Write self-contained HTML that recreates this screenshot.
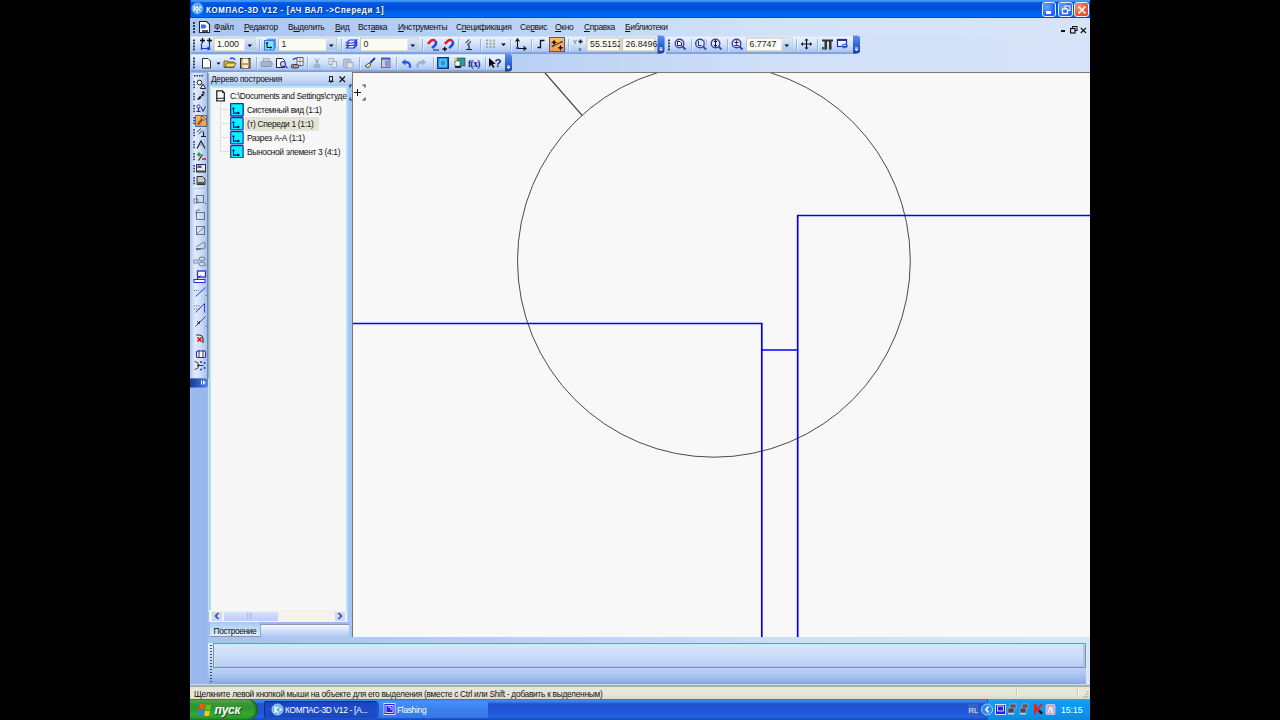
<!DOCTYPE html>
<html><head><meta charset="utf-8">
<style>
*{box-sizing:border-box;margin:0;padding:0}
html,body{width:1280px;height:720px;overflow:hidden;background:#000}
body{position:relative;font-family:"Liberation Sans",sans-serif;font-size:8px;color:#000}
.a{position:absolute}
#scr{position:absolute;left:190px;top:0;width:900px;height:720px;overflow:hidden;background:#c4d8f6}
#title{left:0;top:0;width:900px;height:18px;background:linear-gradient(#4c9cf6 0,#3a8cf2 1.5px,#0060e8 2.5px,#0052dc 5px,#0050dc 9px,#0062ec 12px,#0068f2 16.5px,#0044d8 17.5px,#0038c8 18px)}
#title .t{left:15.5px;top:4px;color:#fff;font-weight:bold;font-size:9.6px;letter-spacing:0.8px;transform:scaleX(0.82);transform-origin:0 0;white-space:nowrap;text-shadow:1px 1px 0 #0a2a8a}
.tb{top:2px;width:14.5px;height:14.5px;border:1px solid #e8f0ff;border-radius:3px;background:radial-gradient(circle at 30% 30%,#6aa8ff,#2a6cf6 55%,#1a56e8)}
#menu{left:0;top:18px;width:900px;height:18px;background:linear-gradient(90deg,#aac6f2 0,#b8d0f5 300px,#c8dcf7 450px,#d2e2f8 600px,#d8e4f8 900px)}
#menu span{position:absolute;top:4px;font-size:8.5px;letter-spacing:-0.35px;white-space:nowrap;color:#111}
#menu u{text-decoration-thickness:1px;text-underline-offset:1px}
#dock{left:0;top:36px;width:900px;height:36px;background:linear-gradient(90deg,#a8c4f0 0,#b6cef4 300px,#c4d8f6 450px,#d0e0f8 600px,#d6e2f8 900px)}
.bar{height:18px;border-radius:0 3px 3px 0;background:linear-gradient(#eaf2fd 0,#d6e5fb 30%,#bcd3f7 70%,#9fbcee 100%);border-bottom:1px solid #7a9ad8}
.grip{width:2px;background:repeating-linear-gradient(#3a5a9a 0 1px,transparent 1px 3px)}
.cb{height:14px;background:#fff;border:1px solid #b8c8d8}
.cbb{width:10px;height:12px;background:linear-gradient(#dae6fb,#aac4f0)}
.sep{width:1px;height:13px;background:#9ab2e0;border-right:1px solid #fff}
.txt{white-space:nowrap}
#draw{left:163px;top:72px;width:737px;height:565px;background:#f7f7f7;border-top:1px solid #7c786c;border-left:1px solid #7c786c}
</style></head><body>
<div id="scr">
  <div id="title" class="a">
    <div class="a" style="left:0;top:0;width:1px;height:18px;background:#0036c0"></div>
    <svg class="a" style="left:1px;top:2px" width="14" height="14"><circle cx="6.4" cy="6.4" r="5.6" fill="#58aaf0"/><circle cx="6.4" cy="6.4" r="5.6" fill="none" stroke="#80c4f8" stroke-width=".6"/>
    <path d="M3.3 3.8 v5.5 M4.2 6.5 l2.5 -2.3 M4.2 6.5 l2.5 2.5 M6.5 5.5 l3 3.5" stroke="#f0f8ff" stroke-width="1.3" fill="none"/><circle cx="9.3" cy="5.3" r="1" fill="#fff"/><rect x="5.3" y="9.3" width="1.6" height="1.6" fill="#fff"/></svg>
    <div class="a t">КОМПАС-3D V12 - [АЧ ВАЛ -&gt;Спереди 1]</div>
    <div class="a tb" style="left:851.5px"><div class="a" style="left:3px;top:8px;width:5px;height:2.5px;background:#fff"></div></div>
    <div class="a tb" style="left:868px"><svg class="a" style="left:2px;top:2px" width="10" height="10"><rect x="4" y="1" width="5" height="4.5" fill="none" stroke="#fff" stroke-width="1"/><rect x="1.5" y="4" width="5" height="4.5" fill="#2a6cf6" stroke="#fff" stroke-width="1.3"/></svg></div>
    <div class="a tb" style="left:884px;background:radial-gradient(circle at 30% 30%,#f89878,#e85a30 55%,#d84818)"><svg class="a" style="left:2px;top:2px" width="10" height="10"><path d="M1.5 1.5 L8.5 8.5 M8.5 1.5 L1.5 8.5" stroke="#fff" stroke-width="1.6"/></svg></div>
  </div>
  <div id="menu" class="a">
    <div class="a" style="left:3px;top:4px;width:2px;height:11px;background:repeating-linear-gradient(#2e3e62 0 1.6px,transparent 1.6px 3px)"></div>
    <svg class="a" style="left:8px;top:2px" width="13" height="14"><path d="M1.5 1.5 h7 l3 3 v8 h-10 z" fill="#fff" stroke="#222" stroke-width="1.1"/><path d="M3 4.5 h4 l1.5 2 l-1.5 2 h-4 z" fill="#3a6af0"/><rect x="4" y="10" width="6" height="2" fill="#555"/></svg>
    <span style="left:24px"><u>Ф</u>айл</span>
    <span style="left:54px"><u>Р</u>едактор</span>
    <span style="left:98px">В<u>ы</u>делить</span>
    <span style="left:145px"><u>В</u>ид</span>
    <span style="left:168px">Вст<u>а</u>вка</span>
    <span style="left:208px"><u>И</u>нструменты</span>
    <span style="left:266px">С<u>п</u>ецификация</span>
    <span style="left:330px">Се<u>р</u>вис</span>
    <span style="left:365px"><u>О</u>кно</span>
    <span style="left:394px"><u>С</u>правка</span>
    <span style="left:435px"><u>Б</u>иблиотеки</span>
    <div class="a" style="left:870.5px;top:12px;width:4.5px;height:2px;background:#111"></div>
    <svg class="a" style="left:880px;top:7.5px" width="8" height="8"><rect x="2.5" y="0.5" width="4.5" height="4" fill="none" stroke="#111" stroke-width="1"/><rect x="0.5" y="2.5" width="4.5" height="4.5" fill="#d8e4f8" stroke="#111" stroke-width="1.2"/></svg>
    <svg class="a" style="left:890px;top:8.5px" width="7" height="7"><path d="M0.8 0.8 L6 6 M6 0.8 L0.8 6" stroke="#111" stroke-width="1.2"/></svg>
  </div>
  <div id="dock" class="a"></div>

  <!-- left vertical toolbar area -->
  <div class="a" style="left:0;top:72px;width:19px;height:613px;background:linear-gradient(90deg,#b0cef8 0,#98b8ee 1.5px,#98b8ee 17px,#a0bcf0 18px)"></div>
  <!-- tree panel -->
  <div class="a" style="left:18px;top:72px;width:145px;height:571px;background:#a6c2f0"></div>
  <div class="a" style="left:18px;top:72px;width:144px;height:14px;background:linear-gradient(#e0ebfc,#c6daf8 50%,#a8c4f0)"></div>
  <div class="a txt" style="left:21px;top:74px;font-size:8.4px;letter-spacing:-0.3px;color:#111">Дерево построения</div>
  <div class="a" style="left:18px;top:86px;width:141px;height:526px;background:#f7f7f7;border:1px solid #b4ecf2;border-top:2px solid #b4ecf2"></div>
  <div class="a" style="left:156px;top:86px;width:3px;height:551px;background:linear-gradient(90deg,#b8f0f8,#a8d8f4 60%,#b0c8e8)"></div>
  <div class="a" style="left:159px;top:86px;width:3px;height:551px;background:#a4c4f8"></div>
  <div class="a" style="left:162px;top:72px;width:1px;height:565px;background:#7c786c"></div>

  <!-- tree content -->
  <div class="a" style="left:138px;top:76px;width:6px;height:8px">
    <svg width="6" height="8"><rect x="1.5" y="0.5" width="3" height="4.5" fill="#ddd" stroke="#222" stroke-width="1"/><line x1="0.5" y1="5.5" x2="5.5" y2="5.5" stroke="#222"/><line x1="3" y1="5" x2="3" y2="7" stroke="#222"/></svg>
  </div>
  <div class="a" style="left:148px;top:75px;width:9px;height:9px">
    <svg width="9" height="9"><path d="M1.5 1.5 L7 7 M7 1.5 L1.5 7" stroke="#111" stroke-width="1.2"/></svg>
  </div>
  <svg class="a" style="left:18px;top:88px" width="140" height="70">
    <path d="M8.8 2.8 h5.5 l2 2 v8 h-7.5 z" fill="#fff" stroke="#222" stroke-width="1.3"/>
    <path d="M14 2.5 l2.5 2.5 h-2.5 z" fill="#0a3a3a"/>
    <path d="M9 10.3 h7" stroke="#333" stroke-width="1.1"/>
    <path d="M10 12 h1.5 M12.5 12 h1.5" stroke="#eee" stroke-width=".6"/>
    <path d="M12.5 15 V64 M12.5 21.5 H22 M12.5 35.5 H22 M12.5 49.5 H22 M12.5 63.5 H22" stroke="#c8c8c0" stroke-width="1" stroke-dasharray="1 1"/>
    <g id="vi">
      <rect x="22.7" y="15.7" width="12.4" height="12.2" rx=".6" fill="#00f8fa" stroke="#2a2ab0" stroke-width="1.2"/>
      <path d="M25.5 20.5 v4.6 h4.5" fill="none" stroke="#00107a" stroke-width="1.1"/>
      <path d="M25.5 19 l1.3 1.5 l-1.3 1.5 l-1.3 -1.5 z" fill="#00107a"/>
      <circle cx="30.3" cy="25" r="1.3" fill="#00107a"/>
    </g>
  </svg>
  <div class="a" style="left:55px;top:117px;width:74px;height:14px;background:#e4e4d6"></div>
  <svg class="a" style="left:18px;top:88px" width="140" height="70">
    <use href="#vi" x="0" y="0"/>
    <use href="#vi" x="0" y="14"/>
    <use href="#vi" x="0" y="28"/>
    <use href="#vi" x="0" y="42"/>
  </svg>
  <div class="a txt" style="left:40px;top:91px;font-size:8.4px;letter-spacing:-0.3px;color:#111">C:\Documents and Settings\студе</div>
  <div class="a txt" style="left:57px;top:105px;font-size:8.4px;letter-spacing:-0.3px;color:#111">Системный вид (1:1)</div>
  <div class="a txt" style="left:57px;top:119px;font-size:8.4px;letter-spacing:-0.3px;color:#111">(т) Спереди 1 (1:1)</div>
  <div class="a txt" style="left:57px;top:133px;font-size:8.4px;letter-spacing:-0.3px;color:#111">Разрез А-А (1:1)</div>
  <div class="a txt" style="left:57px;top:147px;font-size:8.4px;letter-spacing:-0.3px;color:#111">Выносной элемент 3 (4:1)</div>
  <!-- scrollbar + tab -->
  <div class="a" style="left:19px;top:610px;width:138px;height:12px;background:#f4f2ea"></div>
  <div class="a" style="left:18.5px;top:86px;width:3px;height:524px;background:linear-gradient(90deg,#a8b4bc,#c0e8f8 50%,#fdfaf8)"></div>
  <div class="a" style="left:22px;top:611.5px;width:10px;height:9px;background:#c8d8f8"></div>
  <svg class="a" style="left:23px;top:611px" width="8" height="10"><path d="M5.5 2 L2.5 5 L5.5 8" fill="none" stroke="#334a80" stroke-width="1.5"/></svg>
  <div class="a" style="left:34px;top:611.5px;width:54px;height:9px;background:linear-gradient(#d4e0fc,#bccef6)"></div>
  <div class="a" style="left:57px;top:613px;width:5px;height:6px;background:repeating-linear-gradient(90deg,#a8bce8 0 1px,transparent 1px 2px)"></div>
  <div class="a" style="left:145px;top:611.5px;width:10px;height:9px;background:#c8d8f8"></div>
  <svg class="a" style="left:146px;top:611px" width="8" height="10"><path d="M2.5 2 L5.5 5 L2.5 8" fill="none" stroke="#334a80" stroke-width="1.5"/></svg>
  <div class="a" style="left:18px;top:622px;width:141px;height:15px;background:linear-gradient(#9ab8ec,#a6c2f0)"></div>
  <div class="a" style="left:71px;top:623.5px;width:88px;height:14px;background:linear-gradient(#f4f8fe,#d0e0fa 45%,#a8c4f0);border-top:1px solid #8898b0"></div>
  <div class="a" style="left:20px;top:622px;width:51px;height:15px;background:linear-gradient(#a8c8f2,#c8e0f8 60%,#dcecfa);border-bottom:1px solid #8a92a4;border-right:1px solid #98a4b8"></div>
  <div class="a txt" style="left:23.5px;top:625.5px;font-size:8.4px;letter-spacing:-0.38px;color:#111">Построение</div>
  <!-- drawing area -->
  <div class="a" style="left:163px;top:72px;width:737px;height:565px;background:#f8f8f8;border-top:1px solid #7c786c;overflow:hidden">
    <svg width="737" height="565" style="position:absolute;left:0;top:0">
      <g transform="translate(-353,-73)">
        <circle cx="713.9" cy="260.8" r="196.4" fill="none" stroke="#4a4a4a" stroke-width="1"/>
        <line x1="544.2" y1="72" x2="582.1" y2="115.4" stroke="#303030" stroke-width="1.1"/>
        <polyline points="352,323.5 761.8,323.5 761.8,637" fill="none" stroke="#0000f8" stroke-width="1.7"/>
        <polyline points="761.8,350 797.7,350" fill="none" stroke="#0000f8" stroke-width="1.7"/>
        <polyline points="797.7,637 797.7,215.5 1092,215.5" fill="none" stroke="#0000f8" stroke-width="1.7"/>
      </g>
    </svg>
  </div>
  <!-- command bar -->
  <div class="a" style="left:18px;top:637px;width:882px;height:48px;background:linear-gradient(90deg,#a6c2f0,#bcd2f6 40%,#d0e0f8 70%,#d8e6f8)"></div>
  <div class="a" style="left:18px;top:643px;width:878px;height:41px;background:linear-gradient(#e2ecfc 0,#d0e0fa 40%,#a8c4f0 80%,#88a8e0 100%)"></div>
  <div class="a" style="left:23px;top:643px;width:873px;height:25px;background:linear-gradient(#dae6fa,#ccdcf8 50%,#b8cef4);border:1px solid #8a9098;box-shadow:inset 1px 1px 0 #b8f0f4,inset -2px -1px 0 #a8c4f0"></div>
  <div class="a" style="left:20px;top:645px;width:2px;height:38px;background:repeating-linear-gradient(#3a4a6a 0 1.5px,transparent 1.5px 3px)"></div>
  <!-- status bar -->
  <div class="a" style="left:0;top:684px;width:900px;height:15px;background:linear-gradient(#c0d8fc 0,#c0d8fc 1px,#a8b0a8 1.5px,#a8b0a8 2.5px,#e6e6d6 3.5px,#e8e8d8 10px,#dedcc8 14px)"></div>
  <div class="a txt" style="left:4px;top:688.5px;font-size:8.4px;letter-spacing:-0.29px;color:#111">Щелкните левой кнопкой мыши на объекте для его выделения (вместе с Ctrl или Shift - добавить к выделенным)</div>
  <div class="a" style="left:826px;top:687px;width:2px;height:11px;background:linear-gradient(90deg,#d0ccb8 50%,#f8f6ee 50%)"></div>
  <div class="a" style="left:887px;top:687px;width:2px;height:11px;background:linear-gradient(90deg,#d0ccb8 50%,#f8f6ee 50%)"></div>
  <svg class="a" style="left:892px;top:689px" width="8" height="10"><g fill="#b8b4a0"><rect x="5" y="2" width="1.5" height="1.5"/><rect x="3" y="4.5" width="1.5" height="1.5"/><rect x="5" y="4.5" width="1.5" height="1.5"/><rect x="1" y="7" width="1.5" height="1.5"/><rect x="3" y="7" width="1.5" height="1.5"/><rect x="5" y="7" width="1.5" height="1.5"/></g></svg>
  <!-- taskbar -->
  <div class="a" style="left:0;top:699px;width:900px;height:21px;background:linear-gradient(#2c6ce0 0,#3a88e8 1.5px,#3884e8 2.5px,#2252d2 5px,#2054d4 8px,#2058da 14px,#2262e0 18px,#1a48b8 21px)"></div>
  <div class="a" style="left:797px;top:699px;width:103px;height:21px;background:linear-gradient(#28a4f8 0,#129aee 3px,#0c94ea 15px,#0a88dc 21px);border-left:1px solid #0a60c0"></div>
  <div class="a" style="left:0;top:699px;width:68px;height:21px;border-radius:0 10px 10px 0;background:linear-gradient(#3a8a3a 0,#4aaa4a 1.5px,#3a9a3a 4px,#2e922e 9px,#34a834 15px,#2c9a2c 19px,#287a28 21px);box-shadow:inset -2px 0 2px #1a5a1a"></div>
  <div class="a txt" style="left:24.5px;top:702.5px;color:#fff;font-size:12px;font-weight:bold;font-style:italic;letter-spacing:-0.2px;text-shadow:1px 1px 1px #1a4a1a">пуск</div>
  <div class="a" style="left:74px;top:701px;width:113px;height:17px;border-radius:2px;background:linear-gradient(#1a44b8,#1e4cc8 50%,#1a48c0);box-shadow:inset 1px 1px 1px #0c2c88"></div>
  <div class="a txt" style="left:95px;top:705px;color:#fff;font-size:8.4px;letter-spacing:-0.3px">КОМПАС-3D V12 - [А...</div>
  <div class="a" style="left:189px;top:701px;width:109px;height:17px;border-radius:2px;background:linear-gradient(#4a90f8,#3a80f0 50%,#3478e8)"></div>
  <div class="a txt" style="left:207px;top:705px;color:#fff;font-size:8.4px;letter-spacing:-0.3px">Flashing</div>

  <!-- taskbar icons -->
  <svg class="a" style="left:0;top:699px" width="900" height="21" viewBox="190 699 900 21">
    <g transform="translate(198,703)">
      <path d="M2 1.2 q2.5 -1 5 0 l-0.8 5 q-2.5 -1 -5 0 z" fill="#f0581a"/>
      <path d="M8 1.6 q2.5 .8 5 -.2 l-0.8 5 q-2.5 1 -5 .2 z" fill="#6ac018"/>
      <path d="M1 7.2 q2.5 -1 5 0 l-0.8 5 q-2.5 -1 -5 0 z" fill="#3a7af0"/>
      <path d="M7 7.6 q2.5 .8 5 -.2 l-0.8 5 q-2.5 1 -5 .2 z" fill="#f8c818"/>
    </g>
    <circle cx="277.5" cy="709.5" r="5.5" fill="#6ab0e8" stroke="#c8e8ff" stroke-width=".8"/>
    <path d="M275 706 v7 M275 709.5 l3.5 -3 M275 709.5 l3.5 3.5 M279.5 708 l1.5 1.5 l-1.5 1.5" stroke="#fff" stroke-width="1.2" fill="none"/>
    <rect x="384" y="703.5" width="11" height="11" fill="#2020e8" stroke="#fff" stroke-width=".8"/>
    <rect x="386" y="705.5" width="7" height="7" fill="none" stroke="#fff" stroke-width=".8"/>
    <path d="M388 707 h3 v3" stroke="#fff" stroke-width=".8" fill="none"/>
    <!-- tray -->
    <circle cx="987" cy="709.5" r="5.5" fill="#2a8af0" stroke="#c0e0ff" stroke-width=".8"/>
    <path d="M988.5 706.5 l-2.5 3 l2.5 3" stroke="#fff" stroke-width="1.6" fill="none"/>
    <rect x="995.5" y="704.5" width="10" height="10" fill="#2020f0" stroke="#fff" stroke-width=".8"/>
    <rect x="997.5" y="706" width="6" height="5" fill="none" stroke="#fff" stroke-width=".8"/>
    <g transform="translate(1008,704)"><rect x="2" y="0" width="6" height="5" fill="#556" stroke="#ccd" stroke-width=".5"/><rect x="0" y="4" width="6" height="5" fill="#445" stroke="#ccd" stroke-width=".5"/><rect x="0" y="9" width="6" height="1.5" fill="#ccd"/></g>
    <g transform="translate(1020,704)"><rect x="2" y="0" width="6" height="5" fill="#556" stroke="#ccd" stroke-width=".5"/><rect x="0" y="4" width="6" height="5" fill="#445" stroke="#ccd" stroke-width=".5"/><rect x="0" y="9" width="6" height="1.5" fill="#ccd"/></g>
    <path d="M1034 704 l2 0 l1 4 l4 -4 l2 0 l-4 5 l3 5 h-2 l-3 -4 l-1 4 h-2 z" fill="#f01818"/>
    <path d="M1040 710 l3 3 l-1.5 1.5 l-3 -3 z" fill="#111"/>
    <rect x="1046" y="704.5" width="9" height="10" rx="1" fill="#c8a8c8" stroke="#f0e0f0" stroke-width=".6"/>
    <path d="M1048 713 l2 -6 l2 6 M1052 707 v6" stroke="#fff" stroke-width="1" fill="none"/>
  </svg>
  <div class="a txt" style="left:871px;top:704.5px;color:#fff;font-size:8.6px">15:15</div>
  <div class="a txt" style="left:778px;top:704px;width:10px;height:12px;padding-top:1.5px;padding-left:0.5px;color:#e8f0ff;font-size:7.8px;letter-spacing:-0.2px;background:#3a60c0">RL</div>
</div>
<svg class="a" style="left:345px;top:80px" width="25" height="25" viewBox="345 80 25 25">
<path d="M354 92.5 h7 M357.5 89 v7" stroke="#111" stroke-width="1"/>
<path d="M350 87.5 v-2.5 h2.5 M362.5 85 h2.5 v2.5 M350 97.5 v2.5 h2.5 M362.5 100 h2.5 v-2.5" stroke="#333" stroke-width="1.2" fill="none"/>
</svg>
<!--TB--><svg class="a" style="left:0;top:0" width="1280" height="80"><defs>
<linearGradient id="tbg" x1="0" y1="0" x2="0" y2="1"><stop offset="0" stop-color="#ebf3fe"/><stop offset=".35" stop-color="#d8e7fc"/><stop offset=".7" stop-color="#bdd4f8"/><stop offset="1" stop-color="#9cbaee"/></linearGradient>
<linearGradient id="egr" x1="0" y1="0" x2="0" y2="1"><stop offset="0" stop-color="#5a8ef0"/><stop offset=".5" stop-color="#3468d8"/><stop offset="1" stop-color="#1a3fa8"/></linearGradient>
<linearGradient id="cbg" x1="0" y1="0" x2="0" y2="1"><stop offset="0" stop-color="#dce8fc"/><stop offset="1" stop-color="#a8c2f0"/></linearGradient>
<linearGradient id="org" x1="0" y1="0" x2="0" y2="1"><stop offset="0" stop-color="#ffc070"/><stop offset="1" stop-color="#f89a3a"/></linearGradient>
</defs>
<rect x="191" y="36.5" width="470" height="17.0" fill="url(#tbg)"/>
<rect x="191" y="52.5" width="470" height="1.2" fill="#6f8fd0"/>
<path d="M657.5 35.5 h4 q3 0 3 3 v12.0 q0 3 -3 3 h-4 z" fill="url(#egr)"/>
<rect x="659.5" y="47.5" width="3" height="1" fill="#fff"/><path d="M659.0 49.0 h4 l-2 2 z" fill="#fff"/>
<rect x="193" y="39.5" width="2" height="2" fill="#2e3e62"/><rect x="194.5" y="41.0" width="1" height="1" fill="#fff" opacity=".6"/><rect x="193" y="42.5" width="2" height="2" fill="#2e3e62"/><rect x="194.5" y="44.0" width="1" height="1" fill="#fff" opacity=".6"/><rect x="193" y="45.5" width="2" height="2" fill="#2e3e62"/><rect x="194.5" y="47.0" width="1" height="1" fill="#fff" opacity=".6"/><rect x="193" y="48.5" width="2" height="2" fill="#2e3e62"/><rect x="194.5" y="50.0" width="1" height="1" fill="#fff" opacity=".6"/>
<rect x="666" y="36.5" width="190" height="17.0" fill="url(#tbg)"/>
<rect x="666" y="52.5" width="190" height="1.2" fill="#6f8fd0"/>
<path d="M853 35.5 h4 q3 0 3 3 v12.0 q0 3 -3 3 h-4 z" fill="url(#egr)"/>
<rect x="855" y="47.5" width="3" height="1" fill="#fff"/><path d="M854.5 49.0 h4 l-2 2 z" fill="#fff"/>
<rect x="668" y="39.5" width="2" height="2" fill="#2e3e62"/><rect x="669.5" y="41.0" width="1" height="1" fill="#fff" opacity=".6"/><rect x="668" y="42.5" width="2" height="2" fill="#2e3e62"/><rect x="669.5" y="44.0" width="1" height="1" fill="#fff" opacity=".6"/><rect x="668" y="45.5" width="2" height="2" fill="#2e3e62"/><rect x="669.5" y="47.0" width="1" height="1" fill="#fff" opacity=".6"/><rect x="668" y="48.5" width="2" height="2" fill="#2e3e62"/><rect x="669.5" y="50.0" width="1" height="1" fill="#fff" opacity=".6"/>
<rect x="191" y="54.5" width="317" height="17.0" fill="url(#tbg)"/>
<rect x="191" y="70.5" width="317" height="1.2" fill="#6f8fd0"/>
<path d="M505 54 h4 q3 0 3 3 v11.5 q0 3 -3 3 h-4 z" fill="url(#egr)"/>
<rect x="507" y="65.5" width="3" height="1" fill="#fff"/><path d="M506.5 67.0 h4 l-2 2 z" fill="#fff"/>
<rect x="193" y="57.5" width="2" height="2" fill="#2e3e62"/><rect x="194.5" y="59.0" width="1" height="1" fill="#fff" opacity=".6"/><rect x="193" y="60.5" width="2" height="2" fill="#2e3e62"/><rect x="194.5" y="62.0" width="1" height="1" fill="#fff" opacity=".6"/><rect x="193" y="63.5" width="2" height="2" fill="#2e3e62"/><rect x="194.5" y="65.0" width="1" height="1" fill="#fff" opacity=".6"/><rect x="193" y="66.5" width="2" height="2" fill="#2e3e62"/><rect x="194.5" y="68.0" width="1" height="1" fill="#fff" opacity=".6"/>
<path d="M200 40.5 h5 M202.5 38 v5 M207 40.5 h5 M209.5 38 v5" stroke="#111" stroke-width="1.4"/>
<path d="M201.5 43 v7 M209.5 43 v7 M201.5 48.5 h8 M207.5 47 l2 1.5 l-2 1.5" stroke="#1a3ae8" stroke-width="1.2" fill="none"/>
<rect x="214.0" y="38.0" width="41.0" height="13.0" fill="#fbfbf6" stroke="#c2c8b0" stroke-width="1"/><rect x="244.5" y="38.5" width="10" height="12.0" fill="url(#cbg)"/><path d="M247.5 44.5 h4.5 l-2.25 2.5 z" fill="#000"/><text x="217.0" y="47.2" font-size="8.8" fill="#222">1.000</text>
<rect x="259" y="39" width="1" height="13" fill="#9ab2dc"/><rect x="260" y="39" width="1" height="13" fill="#f4f8fe" opacity=".6"/>
<path d="M266 40 l2 -1.5 h8 v9 l-2 2 z" fill="#58a0f8"/><rect x="264.5" y="40.5" width="9.5" height="9.5" fill="#7ee8ff" stroke="#3a6ef0" stroke-width="1"/>
<path d="M267 42.5 v5 h4.5 M266 43.5 l1 -1.2 l1 1.2 M270.5 46.5 l1.2 1 l-1.2 1" stroke="#000" stroke-width="1" fill="none"/>
<rect x="278.5" y="38.0" width="58" height="13.0" fill="#fbfbf6" stroke="#c2c8b0" stroke-width="1"/><rect x="326" y="38.5" width="10" height="12.0" fill="url(#cbg)"/><path d="M329 44.5 h4.5 l-2.25 2.5 z" fill="#000"/><text x="281.5" y="47.2" font-size="8.8" fill="#222">1</text>
<rect x="341" y="39" width="1" height="13" fill="#9ab2dc"/><rect x="342" y="39" width="1" height="13" fill="#f4f8fe" opacity=".6"/>
<g stroke="#2a3ae8" stroke-width="1.2" fill="#e8ecff"><path d="M346.5 48 l3 -3 h7 l-3 3 z"/><path d="M346.5 45.5 l3 -3 h7 l-3 3 z"/><path d="M346.5 43 l3 -3 h7 l-3 3 z"/></g><path d="M353.5 48.5 l3 -3 v-6" stroke="#2a3ae8" stroke-width="1.2" fill="none"/>
<rect x="360.5" y="38.0" width="57.5" height="13.0" fill="#fbfbf6" stroke="#c2c8b0" stroke-width="1"/><rect x="407.5" y="38.5" width="10" height="12.0" fill="url(#cbg)"/><path d="M410.5 44.5 h4.5 l-2.25 2.5 z" fill="#000"/><text x="363.5" y="47.2" font-size="8.8" fill="#222">0</text>
<rect x="422" y="39" width="1" height="13" fill="#9ab2dc"/><rect x="423" y="39" width="1" height="13" fill="#f4f8fe" opacity=".6"/>
<path d="M427.91 43.85 L430.88 40.88 A3 3 0 0 1 435.12 40.88" stroke="#f01818" stroke-width="2.6" fill="none"/><path d="M435.12 40.88 A3 3 0 0 1 435.12 45.12 L432.15 48.09" stroke="#2048e8" stroke-width="2.6" fill="none"/><path d="M433.5 50 h1.2 M435.5 50 h1.2 M437.5 50 h1.2" stroke="#111" stroke-width="1.4"/>
<path d="M444.91 43.85 L447.88 40.88 A3 3 0 0 1 452.12 40.88" stroke="#f01818" stroke-width="2.6" fill="none"/><path d="M452.12 40.88 A3 3 0 0 1 452.12 45.12 L449.15 48.09" stroke="#2048e8" stroke-width="2.6" fill="none"/><path d="M442.5 49 h4.5 M444.75 46.75 v4.5" stroke="#111" stroke-width="1.3"/>
<rect x="458" y="39" width="1" height="13" fill="#9ab2dc"/><rect x="459" y="39" width="1" height="13" fill="#f4f8fe" opacity=".6"/>
<path d="M465.5 43 l4 -3.5 M467 45 l4 -3.5" stroke="#555" stroke-width="1.1"/><path d="M469 44.5 v5 M466 49.5 h6" stroke="#222" stroke-width="1.2"/>
<rect x="480" y="39" width="1" height="13" fill="#9ab2dc"/><rect x="481" y="39" width="1" height="13" fill="#f4f8fe" opacity=".6"/>
<rect x="486.0" y="39.5" width="2" height="2" fill="#a8a890"/><rect x="486.0" y="42.7" width="2" height="2" fill="#a8a890"/><rect x="486.0" y="45.9" width="2" height="2" fill="#a8a890"/><rect x="489.5" y="39.5" width="2" height="2" fill="#a8a890"/><rect x="489.5" y="42.7" width="2" height="2" fill="#a8a890"/><rect x="489.5" y="45.9" width="2" height="2" fill="#a8a890"/><rect x="493.0" y="39.5" width="2" height="2" fill="#a8a890"/><rect x="493.0" y="42.7" width="2" height="2" fill="#a8a890"/><rect x="493.0" y="45.9" width="2" height="2" fill="#a8a890"/>
<path d="M501 43.5 h5 l-2.5 2.5 z" fill="#000"/>
<rect x="510" y="39" width="1" height="13" fill="#9ab2dc"/><rect x="511" y="39" width="1" height="13" fill="#f4f8fe" opacity=".6"/>
<path d="M517.5 48.5 v-9 M515.5 41.5 l2 -2.5 l2 2.5 M517.5 48.5 h8 M523.5 46.5 l2.5 2 l-2.5 2" stroke="#111" stroke-width="1.1" fill="none"/><circle cx="517.5" cy="48" r="1.3" fill="#2020e0"/>
<rect x="531" y="39" width="1" height="13" fill="#9ab2dc"/><rect x="532" y="39" width="1" height="13" fill="#f4f8fe" opacity=".6"/>
<path d="M537.5 47.5 h3 v-7 h4" stroke="#111" stroke-width="1.3" fill="none"/>
<rect x="549.5" y="37.5" width="15" height="14" fill="url(#org)" stroke="#4a5a8a" stroke-width="1"/>
<path d="M552.6 46.2 L561.7 41.9" stroke="#222" stroke-width="1"/><circle cx="552.6" cy="46.2" r="1.1" fill="#3a3ae8"/><circle cx="561.7" cy="41.9" r="1.1" fill="#3a3ae8"/><path d="M554.1 39.2 l.9 2.2 l2.2 .9 l-2.2 .9 l-.9 2.2 l-.9 -2.2 l-2.2 -.9 l2.2 -.9 z M560.5 44.7 l.9 2.2 l2.2 .9 l-2.2 .9 l-.9 2.2 l-.9 -2.2 l-2.2 -.9 l2.2 -.9 z" fill="#111"/>
<rect x="568" y="39" width="1" height="13" fill="#9ab2dc"/><rect x="569" y="39" width="1" height="13" fill="#f4f8fe" opacity=".6"/>
<text x="573" y="44" font-size="6" fill="#333">Y</text><path d="M578.5 41.5 h4 M580.5 39.5 v4" stroke="#111" stroke-width="1.3"/><text x="578.5" y="50.5" font-size="6" fill="#111">x</text>
<rect x="587.0" y="38.0" width="32.5" height="13.0" fill="#fbfbf6" stroke="#c2c8b0" stroke-width="1"/><text x="590.0" y="47.2" font-size="8.8" fill="#222">55.5152</text>
<rect x="620" y="38" width="2" height="13" fill="#d8d8c8"/>
<rect x="622.5" y="38.0" width="32.5" height="13.0" fill="#fbfbf6" stroke="#c2c8b0" stroke-width="1"/><text x="625.5" y="47.2" font-size="8.8" fill="#222">26.8496</text>
<circle cx="679.5" cy="43.5" r="4.3" fill="#dde8fa" stroke="#3e3eb0" stroke-width="1.4"/><path d="M682.5 46.5 l3 3" stroke="#3e3eb0" stroke-width="2"/><path d="M677.5 41.5 h2.5 l1.5 1.5 v2.5 h-4 z" fill="#fff" stroke="#111" stroke-width=".9"/>
<rect x="691" y="39" width="1" height="13" fill="#9ab2dc"/><rect x="692" y="39" width="1" height="13" fill="#f4f8fe" opacity=".6"/>
<circle cx="700" cy="43.5" r="4.3" fill="#dde8fa" stroke="#3e3eb0" stroke-width="1.4"/><path d="M703 46.5 l3 3" stroke="#3e3eb0" stroke-width="2"/><path d="M698.5 41 v4.5 h3" stroke="#333" stroke-width="1" fill="none"/><rect x="704" y="40" width="2.5" height="5" fill="none" stroke="#999" stroke-width=".6"/>
<circle cx="715.5" cy="43.5" r="4.3" fill="#dde8fa" stroke="#3e3eb0" stroke-width="1.4"/><path d="M718.5 46.5 l3 3" stroke="#3e3eb0" stroke-width="2"/><path d="M715.5 40.5 v6 M714 42 l1.5 -1.5 l1.5 1.5 M714 45 l1.5 1.5 l1.5 -1.5" stroke="#111" stroke-width="1" fill="none"/>
<rect x="727" y="39" width="1" height="13" fill="#9ab2dc"/><rect x="728" y="39" width="1" height="13" fill="#f4f8fe" opacity=".6"/>
<circle cx="736.5" cy="43.5" r="4.3" fill="#dde8fa" stroke="#3e3eb0" stroke-width="1.4"/><path d="M739.5 46.5 l3 3" stroke="#3e3eb0" stroke-width="2"/><path d="M734.5 42.5 h4 M736.5 40.5 v4 M734.5 45.5 h4" stroke="#222" stroke-width="1"/>
<rect x="746.5" y="38.0" width="45.5" height="13.0" fill="#fbfbf6" stroke="#c2c8b0" stroke-width="1"/><rect x="781.5" y="38.5" width="10" height="12.0" fill="url(#cbg)"/><path d="M784.5 44.5 h4.5 l-2.25 2.5 z" fill="#000"/><text x="749.5" y="47.2" font-size="8.8" fill="#222">6.7747</text>
<rect x="796" y="39" width="1" height="13" fill="#9ab2dc"/><rect x="797" y="39" width="1" height="13" fill="#f4f8fe" opacity=".6"/>
<path d="M806.5 39 v10 M801.5 44 h10" stroke="#111" stroke-width="1.2"/><path d="M806.5 38.5 l-2 2 h4 z M806.5 49.5 l-2 -2 h4 z M801 44 l2 -2 v4 z M812 44 l-2 -2 v4 z" fill="#111"/>
<rect x="817" y="39" width="1" height="13" fill="#9ab2dc"/><rect x="818" y="39" width="1" height="13" fill="#f4f8fe" opacity=".6"/>
<path d="M822 39.5 h11 v2 h-1.5 v8 h-2.5 v-8 h-2 v8 h-2.5 v-8 h-2.5 z" fill="#333"/><rect x="822" y="47" width="4" height="2.5" fill="#555"/>
<rect x="837.5" y="39.5" width="9" height="7" fill="#fff" stroke="#2a2a90" stroke-width="1.2"/><rect x="837.5" y="39" width="9" height="2" fill="#2a2a90"/><path d="M841.5 47 a3 3 0 0 1 5 -2 M847.5 45 a3 3 0 0 1 -5 2" stroke="#2a7af0" stroke-width="1.4" fill="none"/>
<path d="M202.5 58.5 h5.5 l2.5 2.5 v7 h-8 z" fill="#fff" stroke="#333" stroke-width="1"/>
<path d="M216.5 62.5 h4 l-2 2.2 z" fill="#000"/>
<path d="M224 61 h4 l1 1 h5 v5.5 h-10 z" fill="#d8c040" stroke="#554a10" stroke-width=".8"/><path d="M225 67 l2 -4 h9 l-2 4 z" fill="#f0e070" stroke="#554a10" stroke-width=".8"/><path d="M230 59 a3 3 0 0 1 5 1" stroke="#2040f0" stroke-width="1.4" fill="none"/>
<rect x="240.5" y="58.5" width="9.5" height="9.5" fill="#c0a060" stroke="#3a2a10" stroke-width="1"/><rect x="242.5" y="58.5" width="5.5" height="4.5" fill="#f4f0e0"/><rect x="242.5" y="65" width="5.5" height="3" fill="#e8e8e8"/>
<rect x="256" y="57" width="1" height="13" fill="#9ab2dc"/><rect x="257" y="57" width="1" height="13" fill="#f4f8fe" opacity=".6"/>
<rect x="261" y="61.5" width="11" height="5" rx="1.5" fill="#a8b4c8" stroke="#7888a0" stroke-width=".8"/><rect x="263.5" y="58.5" width="6" height="3" fill="#c8d0e0" stroke="#8894a8" stroke-width=".6"/>
<path d="M276.5 58.5 h6 l2 2 v7 h-8 z" fill="#fff" stroke="#222" stroke-width="1"/><circle cx="283" cy="64" r="2.5" fill="#c8e0f8" stroke="#4040c0" stroke-width="1.2"/><path d="M285 66 l2.5 2" stroke="#4040c0" stroke-width="1.4"/>
<rect x="297" y="57.5" width="6" height="8" fill="#fff" stroke="#444" stroke-width=".8"/><path d="M300 57.5 v8 M297 61.5 h6" stroke="#444" stroke-width=".6"/><path d="M293 60 a2.5 2.5 0 0 1 4 -1" stroke="#2040f0" stroke-width="1.3" fill="none"/><rect x="291.5" y="64.5" width="7" height="3.5" rx="1" fill="#98a0a8" stroke="#223" stroke-width=".8"/><rect x="292.5" y="65.5" width="2" height="1.5" fill="#f04040"/>
<rect x="307" y="57" width="1" height="13" fill="#9ab2dc"/><rect x="308" y="57" width="1" height="13" fill="#f4f8fe" opacity=".6"/>
<path d="M315 58.5 l3 5 M319 58.5 l-3 5" stroke="#8898b0" stroke-width="1"/><circle cx="315.5" cy="66" r="1.5" fill="none" stroke="#8898b0"/><circle cx="318.5" cy="66" r="1.5" fill="none" stroke="#8898b0"/>
<rect x="329" y="58.5" width="4.5" height="6" fill="#e0e6ee" stroke="#98a4b8" stroke-width=".8"/><rect x="332" y="61.5" width="4.5" height="6" fill="#e0e6ee" stroke="#98a4b8" stroke-width=".8"/>
<rect x="343.5" y="59" width="7.5" height="8.5" rx="1" fill="#b8c4d4" stroke="#98a4b8" stroke-width=".8"/><rect x="347" y="62.5" width="6" height="5.5" fill="#dde4ee" stroke="#98a4b8" stroke-width=".8"/>
<rect x="359" y="57" width="1" height="13" fill="#9ab2dc"/><rect x="360" y="57" width="1" height="13" fill="#f4f8fe" opacity=".6"/>
<path d="M365 66 l4 -3 l2 2 l-3 3 z" fill="#e8e0a0" stroke="#333" stroke-width=".8"/><path d="M370 63 l5 -5" stroke="#2a3aa0" stroke-width="2"/>
<rect x="381.5" y="58" width="8.5" height="9.5" fill="#c8ccd8" stroke="#555" stroke-width=".8"/><rect x="381.5" y="58" width="8.5" height="1.5" fill="#3a4ad0"/><rect x="385" y="60.5" width="4" height="6" fill="#8a8af0"/>
<rect x="396" y="57" width="1" height="13" fill="#9ab2dc"/><rect x="397" y="57" width="1" height="13" fill="#f4f8fe" opacity=".6"/>
<path d="M405.5 59 l-4 3.2 l4 3.2 z" fill="#2a5ae8"/><path d="M404.5 62.2 h2 a3.5 3.5 0 0 1 3.5 3.5 v2" stroke="#2a5ae8" stroke-width="2.4" fill="none"/>
<path d="M422 59 l4 3.2 l-4 3.2 z" fill="#a4aec0"/><path d="M423 62.2 h-2 a3.5 3.5 0 0 0 -3.5 3.5 v2" stroke="#a4aec0" stroke-width="2.4" fill="none"/>
<rect x="433" y="57" width="1" height="13" fill="#9ab2dc"/><rect x="434" y="57" width="1" height="13" fill="#f4f8fe" opacity=".6"/>
<rect x="437.5" y="57.5" width="11" height="11" fill="#10a0d8" stroke="#1a2a8a" stroke-width="1"/><rect x="440" y="60" width="6" height="6" fill="none" stroke="#a0f0ff" stroke-width=".8"/><rect x="447.5" y="58" width="1.5" height="11" fill="#1a2a8a"/>
<rect x="457" y="58" width="8" height="8" fill="#20a0a0" stroke="#333" stroke-width=".6"/><rect x="455" y="61" width="5" height="5" fill="#fff" stroke="#333" stroke-width=".6"/><rect x="455" y="66" width="6" height="2" fill="#223"/><text x="453.5" y="63" font-size="7" font-weight="bold" fill="#c8c000">?</text>
<text x="468" y="66.5" font-size="9.5" font-weight="bold" font-family="Liberation Serif" fill="#1a1a90" letter-spacing="-0.6">f(x)</text>
<rect x="485" y="57" width="1" height="13" fill="#9ab2dc"/><rect x="486" y="57" width="1" height="13" fill="#f4f8fe" opacity=".6"/>
<path d="M489 58 v9 l2.2 -2.2 l2 3.2 l1.4 -.9 l-2 -3 h3.2 z" fill="#000"/><text x="494.6" y="66.6" font-size="11.5" font-weight="bold" fill="#1a1a80">?</text>
</svg><!--/TB-->
<!--LT--><svg class="a" style="left:190px;top:72px" width="20" height="320" viewBox="190 72 20 320"><defs>
<linearGradient id="vtb" x1="0" y1="0" x2="1" y2="0"><stop offset="0" stop-color="#b8cff4"/><stop offset=".25" stop-color="#e2ecfc"/><stop offset=".6" stop-color="#cadcf8"/><stop offset="1" stop-color="#9ebcee"/></linearGradient>
<linearGradient id="veg" x1="0" y1="0" x2="1" y2="0"><stop offset="0" stop-color="#1a3a98"/><stop offset=".6" stop-color="#3462d0"/><stop offset="1" stop-color="#5a8ae8"/></linearGradient>
<linearGradient id="vorg" x1="0" y1="0" x2="0" y2="1"><stop offset="0" stop-color="#ffb860"/><stop offset="1" stop-color="#f89838"/></linearGradient>
</defs>
<rect x="191" y="73" width="17" height="305" fill="url(#vtb)"/>
<rect x="207.3" y="73" width="1.2" height="305.5" fill="#687284"/>
<rect x="194.0" y="75" width="1.5" height="1.5" fill="#2a3a6a"/><rect x="196.5" y="75" width="1.5" height="1.5" fill="#2a3a6a"/><rect x="199.0" y="75" width="1.5" height="1.5" fill="#2a3a6a"/><rect x="201.5" y="75" width="1.5" height="1.5" fill="#2a3a6a"/>
<rect x="193.3" y="81.0" width="1.6" height="1.6" fill="#2a3a6a"/><rect x="193.3" y="83.8" width="1.6" height="1.6" fill="#2a3a6a"/><rect x="193.3" y="86.6" width="1.6" height="1.6" fill="#2a3a6a"/>
<rect x="193.3" y="93.0" width="1.6" height="1.6" fill="#2a3a6a"/><rect x="193.3" y="95.8" width="1.6" height="1.6" fill="#2a3a6a"/><rect x="193.3" y="98.6" width="1.6" height="1.6" fill="#2a3a6a"/>
<rect x="193.3" y="105.0" width="1.6" height="1.6" fill="#2a3a6a"/><rect x="193.3" y="107.8" width="1.6" height="1.6" fill="#2a3a6a"/><rect x="193.3" y="110.6" width="1.6" height="1.6" fill="#2a3a6a"/>
<rect x="193.3" y="117.0" width="1.6" height="1.6" fill="#2a3a6a"/><rect x="193.3" y="119.8" width="1.6" height="1.6" fill="#2a3a6a"/><rect x="193.3" y="122.6" width="1.6" height="1.6" fill="#2a3a6a"/>
<rect x="193.3" y="129.0" width="1.6" height="1.6" fill="#2a3a6a"/><rect x="193.3" y="131.8" width="1.6" height="1.6" fill="#2a3a6a"/><rect x="193.3" y="134.6" width="1.6" height="1.6" fill="#2a3a6a"/>
<rect x="193.3" y="141.0" width="1.6" height="1.6" fill="#2a3a6a"/><rect x="193.3" y="143.8" width="1.6" height="1.6" fill="#2a3a6a"/><rect x="193.3" y="146.6" width="1.6" height="1.6" fill="#2a3a6a"/>
<rect x="193.3" y="153.0" width="1.6" height="1.6" fill="#2a3a6a"/><rect x="193.3" y="155.8" width="1.6" height="1.6" fill="#2a3a6a"/><rect x="193.3" y="158.6" width="1.6" height="1.6" fill="#2a3a6a"/>
<rect x="193.3" y="165.0" width="1.6" height="1.6" fill="#2a3a6a"/><rect x="193.3" y="167.8" width="1.6" height="1.6" fill="#2a3a6a"/><rect x="193.3" y="170.6" width="1.6" height="1.6" fill="#2a3a6a"/>
<rect x="193.3" y="177.0" width="1.6" height="1.6" fill="#2a3a6a"/><rect x="193.3" y="179.8" width="1.6" height="1.6" fill="#2a3a6a"/><rect x="193.3" y="182.6" width="1.6" height="1.6" fill="#2a3a6a"/>
<circle cx="199.5" cy="82.5" r="2.3" fill="#fff" stroke="#222" stroke-width="1"/><path d="M200.5 88.5 l2.5 -4.5 l2.5 4.5 z" fill="#fff" stroke="#222" stroke-width="1"/>
<path d="M197.5 100 l7 -7" stroke="#222" stroke-width="1"/><path d="M197 98 l3 0 l-1 2 z M205 93 l-3 0 l1 -2 z" fill="#111"/><circle cx="200" cy="97.5" r="1.2" fill="#111"/><circle cx="202.5" cy="95" r="1.2" fill="#111"/>
<circle cx="198.5" cy="106.5" r="1.6" fill="#fff" stroke="#2a2aa0" stroke-width="1"/><path d="M198.5 108 v3.5 M196.5 111.5 h4" stroke="#2a2aa0" stroke-width="1.2"/><path d="M201 107 l2 4.5 l2.5 -5" stroke="#222" stroke-width=".9" fill="none"/>
<rect x="195.5" y="115.5" width="11" height="11" fill="url(#vorg)" stroke="#5a6a9a" stroke-width="1"/><path d="M198 124.5 l4 -5" stroke="#8a5a10" stroke-width="2.2"/><path d="M200.5 117.5 l3.5 3 l1.5 -1.5 l-3.5 -3 z" fill="#d8d8d8" stroke="#333" stroke-width=".8"/>
<path d="M197 132 l4 -3.5 M198.5 134 l4 -3.5" stroke="#444" stroke-width="1"/><path d="M203.5 131.5 v4.5 M201 136.5 h5" stroke="#222" stroke-width="1.2"/>
<path d="M197 148.5 l4 -7.5 l4 7.5" stroke="#222" stroke-width="1.2" fill="none"/><path d="M199 145 l4 0" stroke="#666" stroke-width=".6"/>
<path d="M197 154.5 h4 M199 152.5 v4" stroke="#10b010" stroke-width="1.6"/><path d="M198.5 160.5 l4 -6" stroke="#222" stroke-width="1.1"/><path d="M202 159 h4" stroke="#e02020" stroke-width="1.6"/>
<rect x="196.5" y="164.5" width="9" height="7.5" fill="#e8e8f0" stroke="#333" stroke-width="1"/><rect x="197.5" y="165.5" width="4" height="2.5" fill="#3a4af0"/><rect x="196.5" y="170.5" width="9" height="1.5" fill="#444"/>
<path d="M197 176.5 h5.5 l2.5 2.5 v5.5 h-8 z" fill="#c8c8c8" stroke="#333" stroke-width="1"/><rect x="197.5" y="182" width="7" height="2" fill="#555"/>
<rect x="194" y="188.5" width="11" height="1" fill="#9ab4e0"/><rect x="194" y="189.5" width="11" height="1" fill="#fff" opacity=".7"/>
<rect x="196.5" y="195.5" width="7" height="7" fill="none" stroke="#6a7488" stroke-width="1"/><rect x="194" y="199" width="4" height="4" fill="none" stroke="#6a7488" stroke-width=".8"/><path d="M204 204 l2 0 l0 -2 z" fill="#a06040"/>
<rect x="196.5" y="212.5" width="8" height="7" fill="none" stroke="#6a7488" stroke-width="1"/><path d="M196 214 v-2 a2 2 0 0 1 2 -2 h2" stroke="#6a7488" stroke-width="1" fill="none"/>
<rect x="196.5" y="226.5" width="8" height="8" fill="none" stroke="#6a7488" stroke-width="1"/><path d="M197 234 l7 -7" stroke="#6a7488" stroke-width=".8"/>
<path d="M196 250 l9 -2 l0 -6 M196 247 l8 -5" stroke="#6a7488" stroke-width=".9" fill="none"/><rect x="196" y="248" width="5" height="2" fill="#6a7488"/>
<rect x="194" y="260" width="4" height="3" fill="none" stroke="#6a7488" stroke-width=".8"/><ellipse cx="202" cy="259" rx="3" ry="2" fill="none" stroke="#6a7488" stroke-width=".9"/><ellipse cx="202" cy="264" rx="3" ry="2" fill="none" stroke="#6a7488" stroke-width=".9"/><path d="M205 266 l1.5 0 l0 -1.5 z" fill="#a06040"/>
<rect x="197.5" y="271" width="8" height="6" fill="#fff" stroke="#2a2ae8" stroke-width="1.3"/><path d="M194.5 281.5 l6 -6" stroke="#111" stroke-width="1"/><rect x="194" y="279.5" width="11" height="3" fill="#fff" stroke="#2a2ae8" stroke-width="1"/>
<path d="M195.5 296.5 l10 -9" stroke="#3a3ae8" stroke-width="1"/><path d="M194 290.5 h5 M201 290.5 h2" stroke="#555" stroke-width=".8" stroke-dasharray="1 .8"/><path d="M205 296 l1.5 0 l0 -1.5 z" fill="#555"/>
<path d="M195.5 312.5 l9 -9 v9" stroke="#3a3ae8" stroke-width="1" fill="none"/><path d="M194 306 h6 M194 309 h6" stroke="#555" stroke-width=".8" stroke-dasharray="1 .8"/>
<path d="M195.5 326.5 l10 -10" stroke="#3a3ae8" stroke-width="1"/><path d="M197 321 l3 3 M200 321 l-3 3" stroke="#333" stroke-width=".9"/><path d="M205 327 l1.5 0 l0 -1.5 z" fill="#555"/>
<path d="M196 335 h3 a4 4 0 0 1 4 4 v4" stroke="#333" stroke-width="1.2" fill="none"/><path d="M197.5 337.5 l4 4 M201.5 337.5 l-4 4" stroke="#e01010" stroke-width="1.6"/>
<rect x="196.5" y="351" width="9" height="6.5" rx="1" fill="#fff" stroke="#2a2ae8" stroke-width="1.2"/><path d="M199 350 v8 M203 350 v8" stroke="#222" stroke-width=".9"/>
<path d="M194.5 361.5 a3 3 0 0 1 0 8" stroke="#333" stroke-width=".9" fill="none"/><circle cx="201" cy="362" r="1" fill="#2a2ae8"/><circle cx="204.5" cy="363" r="1" fill="#2a2ae8"/><circle cx="204.5" cy="368" r="1" fill="#2a2ae8"/><circle cx="201" cy="369.5" r="1" fill="#2a2ae8"/><path d="M197.5 365.5 h6" stroke="#222" stroke-width=".9"/><circle cx="198.5" cy="365.5" r="1" fill="#111"/>
<path d="M190 378.5 h18 v7 q0 2 -2 2 h-16 z" fill="url(#veg)"/><rect x="201" y="380.5" width="1" height="4" fill="#fff"/><path d="M203 380 l2.5 2.5 l-2.5 2.5 z" fill="#fff"/>
</svg><!--/LT-->
</body></html>
